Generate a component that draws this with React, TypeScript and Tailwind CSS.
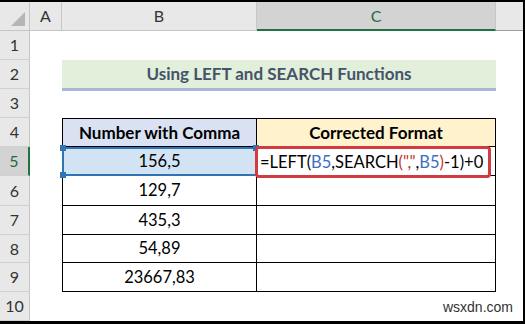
import React from "react";

const rowStart = [
  "row-start-2",
  "row-start-3",
  "row-start-4",
  "row-start-5",
  "row-start-6",
  "row-start-7",
  "row-start-8",
  "row-start-9",
  "row-start-10",
  "row-start-11",
];

function RowHead({ n }: { n: number }) {
  const sel = n === 5;
  return (
    <div
      className={
        "col-start-1 flex items-center justify-center text-[16px] border-b border-[#d0d0d0] " +
        rowStart[n - 1] +
        (sel
          ? " bg-[#d3d3d3] text-[#1e6b42] border-r-2 border-r-[#217346]"
          : " bg-[#e8e8e8] text-[#333] border-r border-r-[#c6c6c6]")
      }
    >
      {n}
    </div>
  );
}

const dataRows = [
  { v: "129,7", r: "row-start-7" },
  { v: "435,3", r: "row-start-8" },
  { v: "54,89", r: "row-start-9" },
  { v: "23667,83", r: "row-start-10" },
];

export default function App() {
  return (
    <div className="w-[525px] h-[324px] bg-black pt-[2px] pr-[2px] pb-[3px] overflow-hidden font-['Lato','Open_Sans',sans-serif]">
      <div className="relative w-[523px] h-[319px] bg-white grid grid-cols-[30px_32px_195px_239px_27px] grid-rows-[29px_29px_29px_29px_29px_29px_30px_29px_28px_29px_29px]">
        {/* corner */}
        <div className="relative row-start-1 col-start-1 bg-[#e8e8e8] border-r border-b border-[#c6c6c6]">
          <div className="absolute right-[4px] bottom-[4px] w-0 h-0 border-l-[14px] border-l-transparent border-b-[14px] border-b-[#b5b5b5]" />
        </div>
        {/* column headers */}
        <div className="row-start-1 col-start-2 flex items-center justify-center bg-[#e8e8e8] border-r border-b border-[#c6c6c6] text-[16px] text-[#333]">A</div>
        <div className="row-start-1 col-start-3 flex items-center justify-center bg-[#e8e8e8] border-r border-b border-[#c6c6c6] text-[16px] text-[#333]">B</div>
        <div className="row-start-1 col-start-4 flex items-center justify-center bg-[#d3d3d3] border-r border-r-[#c6c6c6] border-b-2 border-b-[#217346] text-[16px] text-[#1e6b42]">C</div>
        <div className="row-start-1 col-start-5 bg-[#e8e8e8] border-b border-[#a0a0a0]" />

        {[1, 2, 3, 4, 5, 6, 7, 8, 9, 10].map((n) => (
          <RowHead key={n} n={n} />
        ))}

        {/* title */}
        <div className="row-start-3 col-start-3 col-span-2 self-start h-[31px] flex items-center justify-center bg-[#e2efda] border-b-[3px] border-b-[#a7b7d7] text-[17px] font-bold text-[#44546a]">
          Using LEFT and SEARCH Functions
        </div>

        {/* table header */}
        <div className="row-start-5 col-start-3 flex items-center justify-center bg-[#d9e1f2] border border-black text-[17px] font-bold text-black">
          Number with Comma
        </div>
        <div className="row-start-5 col-start-4 flex items-center justify-center bg-[#fff2cc] border-t border-r border-b border-black text-[17px] font-bold text-black">
          Corrected Format
        </div>

        {/* B5 selected */}
        <div className="relative row-start-6 col-start-3 flex items-center justify-center bg-[#d2e3f3] border-2 border-[#2f75b5] text-[16.5px] text-black">
          156,5
          <div className="absolute -left-[4px] -top-[4px] w-[6px] h-[6px] bg-[#2f75b5]" />
          <div className="absolute -left-[4px] -bottom-[4px] w-[6px] h-[6px] bg-[#2f75b5]" />
          <div className="absolute -right-[4px] -top-[4px] w-[6px] h-[6px] bg-[#2f75b5]" />
        </div>
        <div className="relative row-start-6 col-start-4 border-r border-b border-black">
          <div className="absolute -left-[2px] -top-[1px] w-[236px] h-[32px] rounded-[4px] border-[3px] border-[#d23b40] flex items-center pl-[2px] text-[16.5px] text-black whitespace-nowrap bg-white">
            <span>=LEFT(</span>
            <span className="text-[#3b6fc6]">B5</span>
            <span>,SEARCH</span>
            <span className="text-[#c0392b]">(&quot;,&quot;</span>
            <span>,</span>
            <span className="text-[#3b6fc6]">B5</span>
            <span className="text-[#c0392b]">)</span>
            <span>-1)+0</span>
          </div>
        </div>

        {dataRows.map(({ v, r }) => (
          <React.Fragment key={v}>
            <div className={"col-start-3 flex items-center justify-center border-l border-r border-b border-black text-[16.5px] text-black " + r}>
              {v}
            </div>
            <div className={"col-start-4 border-r border-b border-black " + r} />
          </React.Fragment>
        ))}

        <div className="absolute right-[10px] bottom-[3px] text-[14px] text-[#333] font-['Liberation_Sans',Arial,sans-serif]">
          wsxdn.com
        </div>
      </div>
    </div>
  );
}
